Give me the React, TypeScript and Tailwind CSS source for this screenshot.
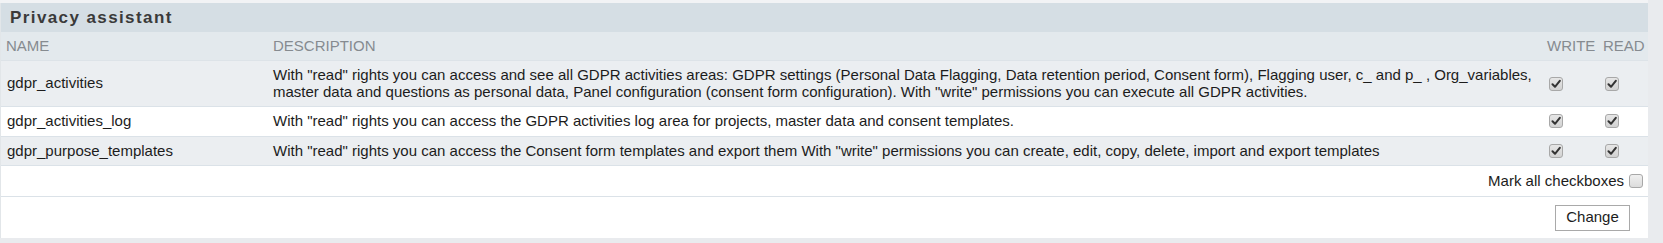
import React from "react";

const font = { fontFamily: '"Liberation Sans", Arial, sans-serif' };

function Check({ checked }: { checked: boolean }) {
  return (
    <span className="inline-flex w-[14px] h-[14px] rounded-[3px] border border-[#a8a8a8] bg-gradient-to-b from-[#e6e6e6] to-[#d2d2d2] items-center justify-center">
      {checked && (
        <svg width="10" height="10" viewBox="0 0 10 10">
          <path d="M1.5 5.2 L4 7.8 L8.8 1.8" fill="none" stroke="#333" strokeWidth="2" strokeLinecap="round" strokeLinejoin="round" />
        </svg>
      )}
    </span>
  );
}

const rows = [
  {
    name: "gdpr_activities",
    desc: 'With "read" rights you can access and see all GDPR activities areas: GDPR settings (Personal Data Flagging, Data retention period, Consent form), Flagging user, c_ and p_ , Org_variables, master data and questions as personal data, Panel configuration (consent form configuration). With "write" permissions you can execute all GDPR activities.',
    shade: true,
  },
  {
    name: "gdpr_activities_log",
    desc: 'With "read" rights you can access the GDPR activities log area for projects, master data and consent templates.',
    shade: false,
  },
  {
    name: "gdpr_purpose_templates",
    desc: 'With "read" rights you can access the Consent form templates and export them With "write" permissions you can create, edit, copy, delete, import and export templates',
    shade: true,
  },
];

export default function App() {
  return (
    <div className="w-[1663px] h-[243px] bg-[#e9ebee] flex flex-col overflow-hidden" style={font}>
      <div className="h-[3px] bg-[#f2f3f5] w-[1648px]" />
      <div className="w-[1648px] pl-[1px] bg-[#e2e6e9] flex flex-col">
        <div className="h-[29px] bg-[#d5dee4] flex items-center pl-[9px] text-[17px] font-bold tracking-[1.4px] text-[#3a3a3a]">
          Privacy assistant
        </div>
        <div className="grid grid-cols-[272px_1271px_56px_48px] h-[29px] bg-[#e3e9ed] items-center text-[15px] text-[#868b90] uppercase border-b border-[#dde3e8]">
          <div className="pl-[5px]">Name</div>
          <div>Description</div>
          <div className="pl-[3px]">Write</div>
          <div className="pl-[3px]">Read</div>
        </div>
        {rows.map((r) => (
          <div
            key={r.name}
            className={`grid grid-cols-[272px_1271px_56px_48px] items-center text-[15px] leading-[16.5px] text-[#1c1c1c] border-b border-[#dbe2e8] py-[6px] ${r.shade ? "bg-[#ebeef1]" : "bg-white"}`}
          >
            <div className="pl-[6px]">{r.name}</div>
            <div className="pr-[6px]">{r.desc}</div>
            <div className="pl-[5px] flex"><Check checked /></div>
            <div className="pl-[5px] flex"><Check checked /></div>
          </div>
        ))}
        <div className="h-[31px] bg-white border-b border-[#dbe2e8] flex items-center justify-end pr-[5px] gap-[5px] text-[15px] text-[#1c1c1c]">
          <span>Mark all checkboxes</span>
          <span className="w-[14px] h-[14px] rounded-[3px] border border-[#a8a8a8] bg-gradient-to-b from-[#f0f0f0] to-[#dcdcdc]" />
        </div>
        <div className="h-[41px] bg-white flex items-center justify-end pr-[18px]">
          <button className="w-[75px] h-[26px] border border-[#a9a9a9] bg-white text-[15px] text-[#1c1c1c]">
            Change
          </button>
        </div>
      </div>
    </div>
  );
}
